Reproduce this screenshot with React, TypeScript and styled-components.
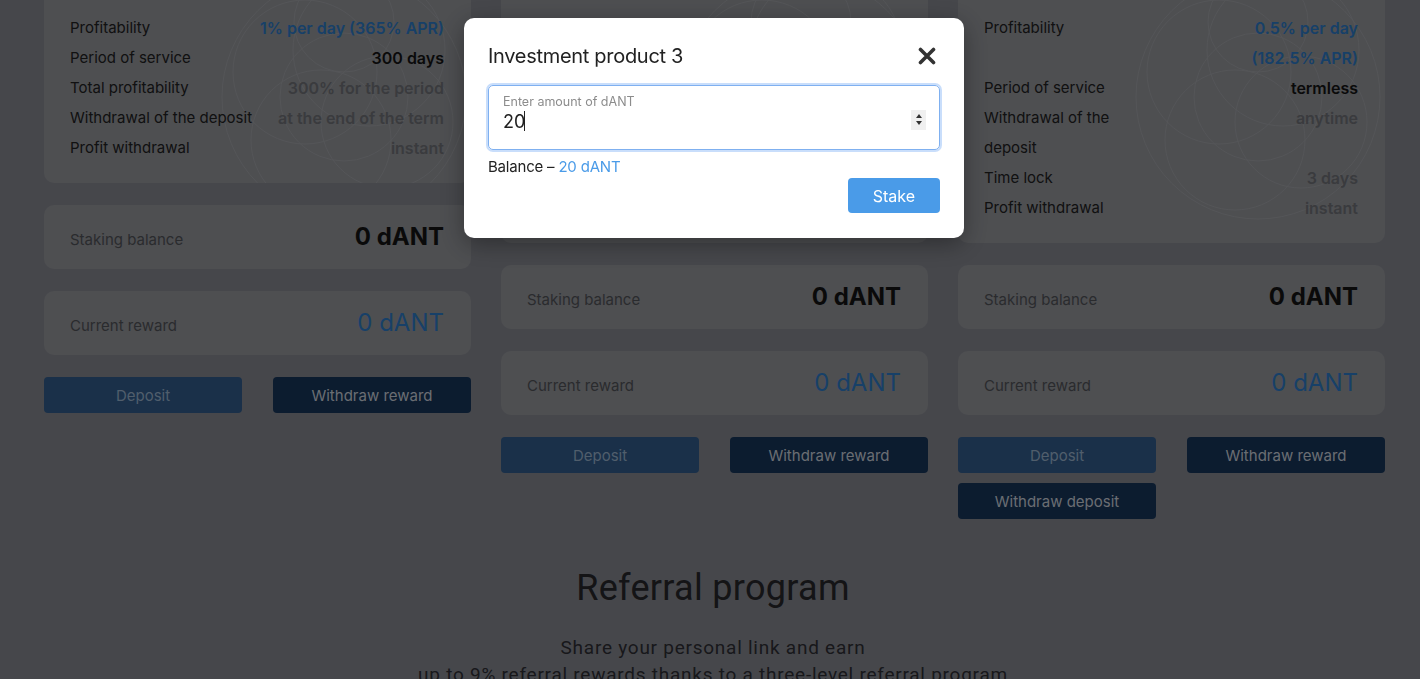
import styled, { createGlobalStyle } from "styled-components";

const GlobalStyle = createGlobalStyle`
  html, body {
    margin: 0;
    padding: 0;
    overflow: hidden;
  }
  body {
    background: #8d8f97;
    font-family: Inter, "Noto Sans", sans-serif;
    color: #2a2a2a;
  }
`;

/* the page is scrolled down a little, so the top of the cards is cut off */
const Products = styled.section`
  display: grid;
  grid-template-columns: repeat(3, 1fr);
  column-gap: 30px;
  align-items: start;
  width: 1341px;
  margin: -20px 0 0 44px;
`;

const Column = styled.div`
  display: flex;
  flex-direction: column;
  gap: 22px;
`;

const InfoCard = styled.div`
  position: relative;
  overflow: hidden;
  background: #9c9ea3;
  border-radius: 10px;
  padding: 33px 27px 20px 26px;
`;

const Rings = styled.svg`
  position: absolute;
  right: -8px;
  top: -18px;
  width: 270px;
  height: 270px;
  pointer-events: none;
`;

const Row = styled.div`
  position: relative;
  display: flex;
  justify-content: space-between;
  align-items: flex-start;
  gap: 16px;
  font-size: 15px;
  line-height: 30px;
`;

const Label = styled.span<{ $max?: number }>`
  color: #222;
  max-width: ${({ $max }) => ($max ? `${$max}px` : "none")};
`;

const Value = styled.span<{ $tone: "blue" | "dark" | "grey"; $max?: number }>`
  font-size: 16px;
  line-height: 30px;
  font-weight: 600;
  text-align: right;
  max-width: ${({ $max }) => ($max ? `${$max}px` : "none")};
  color: ${({ $tone }) =>
    $tone === "blue" ? "#2f80d0" : $tone === "dark" ? "#151515" : "#74767c"};
`;

const StatCard = styled.div`
  display: flex;
  justify-content: space-between;
  align-items: baseline;
  box-sizing: border-box;
  height: 64px;
  padding: 16px 27px 0 26px;
  background: #9c9ea3;
  border-radius: 10px;
`;

const StatLabel = styled.span`
  font-size: 15px;
  color: #55575c;
`;

const StatValue = styled.span<{ $accent?: boolean }>`
  font-size: 24px;
  line-height: 32px;
  font-weight: ${({ $accent }) => ($accent ? 400 : 700)};
  color: ${({ $accent }) => ($accent ? "#2f80d0" : "#151515")};
`;

const Buttons = styled.div`
  display: grid;
  grid-template-columns: 1fr 1fr;
  column-gap: 31px;
  row-gap: 10px;
`;

const ActionButton = styled.button<{ $variant: "light" | "dark" }>`
  height: 36px;
  border: none;
  border-radius: 4px;
  font-family: Inter, sans-serif;
  font-size: 15px;
  cursor: pointer;
  background: ${({ $variant }) => ($variant === "light" ? "#346092" : "#18385e")};
  color: ${({ $variant }) => ($variant === "light" ? "#a0bcd8" : "#d4dbe4")};
`;

const Referral = styled.section`
  margin-top: 49px;
  padding-left: 6px;
  text-align: center;
  font-family: Roboto, "Liberation Sans", sans-serif;
`;

const ReferralTitle = styled.h2`
  margin: 0 0 26px;
  font-size: 36px;
  line-height: 40px;
  font-weight: 400;
  letter-spacing: 0.3px;
  color: #28282c;
`;

const ReferralText = styled.p`
  margin: 0;
  font-size: 19px;
  line-height: 27px;
  letter-spacing: 0.75px;
  color: #303036;
`;

const Overlay = styled.div`
  position: fixed;
  inset: 0;
  display: flex;
  justify-content: center;
  align-items: flex-start;
  padding: 18px 0 0 8px;
  background: rgba(0, 0, 0, 0.5);
`;

const Modal = styled.div`
  width: 500px;
  box-sizing: border-box;
  padding: 24px 24px 25px;
  background: #fff;
  border-radius: 10px;
  box-shadow: 0 6px 24px rgba(0, 0, 0, 0.35);
`;

const ModalHeader = styled.div`
  display: flex;
  justify-content: space-between;
  align-items: center;
  height: 28px;
  margin-bottom: 15px;
`;

const ModalTitle = styled.h2`
  margin: 0;
  font-size: 20px;
  font-weight: 400;
  letter-spacing: -0.3px;
  color: #222;
`;

const CloseButton = styled.button`
  display: flex;
  margin-right: 4px;
  padding: 0;
  border: none;
  background: none;
  cursor: pointer;
`;

const Field = styled.label`
  display: flex;
  box-sizing: border-box;
  height: 65px;
  padding: 0 13px 0 14px;
  border: 1px solid #7fb0f0;
  border-radius: 5px;
  box-shadow: 0 0 0 2px #c9defb;
`;

const FieldBody = styled.div`
  flex: 1;
  display: flex;
  flex-direction: column;
  padding-top: 8px;
`;

const FieldLabel = styled.span`
  font-size: 12.5px;
  line-height: 16px;
  color: #8c8c8c;
`;

const InputLine = styled.div`
  display: flex;
  align-items: center;
  height: 22px;
`;

const AmountInput = styled.input`
  width: 21px;
  padding: 0;
  border: none;
  outline: none;
  font-family: Inter, sans-serif;
  font-size: 18px;
  color: #222;
  background: transparent;
`;

const Caret = styled.span`
  width: 1px;
  height: 20px;
  background: #222;
`;

const Spinner = styled.span`
  align-self: center;
  margin-top: 4px;
  display: flex;
  flex-direction: column;
  align-items: center;
  justify-content: center;
  gap: 3px;
  width: 15px;
  height: 20px;
  background: #f0f0f0;
`;

const Arrow = styled.span<{ $down?: boolean }>`
  width: 0;
  height: 0;
  border-left: 3.5px solid transparent;
  border-right: 3.5px solid transparent;
  ${({ $down }) =>
    $down ? "border-top: 4px solid #333;" : "border-bottom: 4px solid #333;"}
`;

const Balance = styled.div`
  margin-top: 7px;
  font-size: 15px;
  line-height: 20px;
  letter-spacing: -0.2px;
  color: #222;
`;

const BalanceAmount = styled.span`
  color: #4a9be8;
`;

const ModalFooter = styled.div`
  display: flex;
  justify-content: flex-end;
  margin-top: 1px;
`;

const StakeButton = styled.button`
  height: 35px;
  padding: 0 25px;
  border: none;
  border-radius: 4px;
  background: #4a9be8;
  color: #fff;
  font-family: Inter, sans-serif;
  font-size: 16px;
  cursor: pointer;
`;

type Tone = "blue" | "dark" | "grey";

interface Term {
  label: string;
  value: string;
  tone: Tone;
}

interface Product {
  id: number;
  terms: Term[];
  labelMax?: number;
  valueMax?: number;
  withdrawDeposit?: boolean;
}

const products: Product[] = [
  {
    id: 1,
    terms: [
      { label: "Profitability", value: "1% per day (365% APR)", tone: "blue" },
      { label: "Period of service", value: "300 days", tone: "dark" },
      { label: "Total profitability", value: "300% for the period", tone: "grey" },
      { label: "Withdrawal of the deposit", value: "at the end of the term", tone: "grey" },
      { label: "Profit withdrawal", value: "instant", tone: "grey" },
    ],
  },
  {
    id: 2,
    labelMax: 140,
    valueMax: 150,
    terms: [
      { label: "Profitability", value: "0.7% per day (255.5% APR)", tone: "blue" },
      { label: "Period of service", value: "termless", tone: "dark" },
      { label: "Withdrawal of the deposit", value: "anytime", tone: "grey" },
      { label: "Time lock", value: "7 days", tone: "grey" },
      { label: "Profit withdrawal", value: "instant", tone: "grey" },
    ],
  },
  {
    id: 3,
    labelMax: 140,
    valueMax: 150,
    withdrawDeposit: true,
    terms: [
      { label: "Profitability", value: "0.5% per day (182.5% APR)", tone: "blue" },
      { label: "Period of service", value: "termless", tone: "dark" },
      { label: "Withdrawal of the deposit", value: "anytime", tone: "grey" },
      { label: "Time lock", value: "3 days", tone: "grey" },
      { label: "Profit withdrawal", value: "instant", tone: "grey" },
    ],
  },
];

function RingArt() {
  return (
    <Rings viewBox="0 0 270 270" fill="none" stroke="#a9abb0" strokeWidth="1">
      <circle cx="135" cy="135" r="122" />
      <circle cx="135" cy="135" r="64" />
      <circle cx="160" cy="88" r="76" />
      <circle cx="96" cy="110" r="72" />
      <circle cx="112" cy="178" r="70" />
      <circle cx="178" cy="160" r="66" />
      <circle cx="135" cy="60" r="50" />
    </Rings>
  );
}

export default function App() {
  return (
    <>
      <GlobalStyle />
      <Products>
        {products.map((product) => (
          <Column key={product.id}>
            <InfoCard>
              <RingArt />
              {product.terms.map((term) => (
                <Row key={term.label}>
                  <Label $max={product.labelMax}>{term.label}</Label>
                  <Value $tone={term.tone} $max={product.valueMax}>
                    {term.value}
                  </Value>
                </Row>
              ))}
            </InfoCard>
            <StatCard>
              <StatLabel>Staking balance</StatLabel>
              <StatValue>0 dANT</StatValue>
            </StatCard>
            <StatCard>
              <StatLabel>Current reward</StatLabel>
              <StatValue $accent>0 dANT</StatValue>
            </StatCard>
            <Buttons>
              <ActionButton $variant="light">Deposit</ActionButton>
              <ActionButton $variant="dark">Withdraw reward</ActionButton>
              {product.withdrawDeposit && (
                <ActionButton $variant="dark">Withdraw deposit</ActionButton>
              )}
            </Buttons>
          </Column>
        ))}
      </Products>

      <Referral>
        <ReferralTitle>Referral program</ReferralTitle>
        <ReferralText>Share your personal link and earn</ReferralText>
        <ReferralText>
          up to 9% referral rewards thanks to a three-level referral program
        </ReferralText>
      </Referral>

      <Overlay>
        <Modal>
          <ModalHeader>
            <ModalTitle>Investment product 3</ModalTitle>
            <CloseButton aria-label="Close">
              <svg width="18" height="18" viewBox="0 0 18 18">
                <path
                  d="M2.5 2.5 15.5 15.5 M15.5 2.5 2.5 15.5"
                  stroke="#333"
                  strokeWidth="3.6"
                  strokeLinecap="round"
                />
              </svg>
            </CloseButton>
          </ModalHeader>
          <Field>
            <FieldBody>
              <FieldLabel>Enter amount of dANT</FieldLabel>
              <InputLine>
                <AmountInput defaultValue="20" />
                <Caret />
              </InputLine>
            </FieldBody>
            <Spinner>
              <Arrow />
              <Arrow $down />
            </Spinner>
          </Field>
          <Balance>
            Balance – <BalanceAmount>20 dANT</BalanceAmount>
          </Balance>
          <ModalFooter>
            <StakeButton>Stake</StakeButton>
          </ModalFooter>
        </Modal>
      </Overlay>
    </>
  );
}
